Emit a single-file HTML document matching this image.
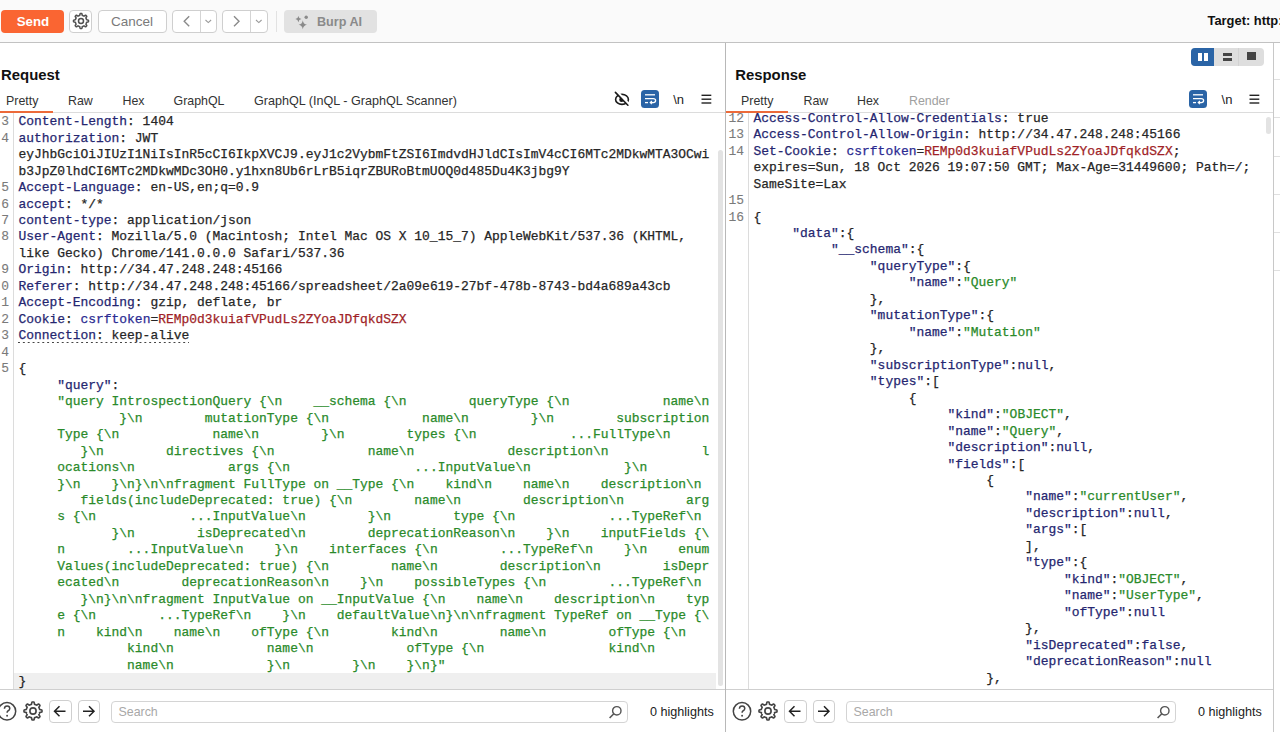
<!DOCTYPE html>
<html><head><meta charset="utf-8">
<style>
*{box-sizing:border-box}
html,body{margin:0;padding:0}
body{width:1280px;height:732px;overflow:hidden;position:relative;background:#fff;font-family:"Liberation Sans",sans-serif;color:#222}
.a{position:absolute}
.tb{left:0;top:0;width:1280px;height:42px;background:#fafafa}
.hl{height:1px;background:#c4c4c4}
.vl{width:1px;background:#c4c4c4}
.btn{position:absolute;border:1px solid #cfcfcf;border-radius:4px;background:#fff}
.ed{position:absolute;overflow:hidden;-webkit-text-stroke:0.25px currentColor;font-family:"Liberation Mono",monospace;font-size:12.94px;line-height:16.47px;white-space:pre;color:#262626}
.ed pre,.nums{margin:0;font:inherit;white-space:pre}
.hn{color:#252670}
.ck{color:#2b2b92}
.cv{color:#a01f27}
.jk{color:#252670}
.js{color:#2a8a2a}
.jl{color:#252670}
.nums{color:#7a7a7a;text-align:right;-webkit-text-stroke:0.1px currentColor}
.dot{background-image:linear-gradient(to right,#444 0,#444 2px,transparent 2px);background-size:4.86px 1.5px;background-repeat:repeat-x;background-position:0 14px}
.tab{position:absolute;font-size:12.4px;color:#333;top:94px}
.h1{position:absolute;font-weight:bold;font-size:14.9px;color:#111}
.sb{position:absolute;font-size:12.6px;color:#222;margin-top:1.3px}
.search{position:absolute;border:1px solid #d4d4d4;border-radius:4px;background:#fff}
.search span{position:absolute;left:7px;top:3px;font-size:12.4px;color:#a8a8a8}
</style></head><body>
<!-- toolbar -->
<div class="a tb"></div>
<div class="a hl" style="left:0;top:42px;width:1280px;background:#c2c2c2"></div>
<div class="a" style="left:1px;top:10px;width:63px;height:22.5px;background:#fa6532;border-radius:4px"></div>
<div class="a" style="left:1.5px;top:14px;width:63px;text-align:center;font-weight:bold;font-size:13.3px;color:#fff">Send</div>
<div class="btn" style="left:69px;top:10px;width:23px;height:22.5px"></div>
<svg class="a" style="left:70.9px;top:11.2px" width="20" height="20" viewBox="0 0 20 20"><path d="M10.00,2.50 10.29,2.51 10.59,2.52 10.87,2.67 11.06,3.33 11.17,4.09 11.33,4.46 11.55,4.51 11.76,4.58 11.97,4.65 12.18,4.73 12.39,4.82 12.59,4.92 12.79,5.03 12.98,5.14 13.35,4.99 13.97,4.53 14.57,4.20 14.87,4.30 15.09,4.49 15.30,4.70 15.51,4.91 15.70,5.13 15.80,5.43 15.47,6.03 15.01,6.65 14.86,7.02 14.97,7.21 15.08,7.41 15.18,7.61 15.27,7.82 15.35,8.03 15.42,8.24 15.49,8.45 15.54,8.67 15.91,8.83 16.67,8.94 17.33,9.13 17.48,9.41 17.49,9.71 17.50,10.00 17.49,10.29 17.48,10.59 17.33,10.87 16.67,11.06 15.91,11.17 15.54,11.33 15.49,11.55 15.42,11.76 15.35,11.97 15.27,12.18 15.18,12.39 15.08,12.59 14.97,12.79 14.86,12.98 15.01,13.35 15.47,13.97 15.80,14.57 15.70,14.87 15.51,15.09 15.30,15.30 15.09,15.51 14.87,15.70 14.57,15.80 13.97,15.47 13.35,15.01 12.98,14.86 12.79,14.97 12.59,15.08 12.39,15.18 12.18,15.27 11.97,15.35 11.76,15.42 11.55,15.49 11.33,15.54 11.17,15.91 11.06,16.67 10.87,17.33 10.59,17.48 10.29,17.49 10.00,17.50 9.71,17.49 9.41,17.48 9.13,17.33 8.94,16.67 8.83,15.91 8.67,15.54 8.45,15.49 8.24,15.42 8.03,15.35 7.82,15.27 7.61,15.18 7.41,15.08 7.21,14.97 7.02,14.86 6.65,15.01 6.03,15.47 5.43,15.80 5.13,15.70 4.91,15.51 4.70,15.30 4.49,15.09 4.30,14.87 4.20,14.57 4.53,13.97 4.99,13.35 5.14,12.98 5.03,12.79 4.92,12.59 4.82,12.39 4.73,12.18 4.65,11.97 4.58,11.76 4.51,11.55 4.46,11.33 4.09,11.17 3.33,11.06 2.67,10.87 2.52,10.59 2.51,10.29 2.50,10.00 2.51,9.71 2.52,9.41 2.67,9.13 3.33,8.94 4.09,8.83 4.46,8.67 4.51,8.45 4.58,8.24 4.65,8.03 4.73,7.82 4.82,7.61 4.92,7.41 5.03,7.21 5.14,7.02 4.99,6.65 4.53,6.03 4.20,5.43 4.30,5.13 4.49,4.91 4.70,4.70 4.91,4.49 5.13,4.30 5.43,4.20 6.03,4.53 6.65,4.99 7.02,5.14 7.21,5.03 7.41,4.92 7.61,4.82 7.82,4.73 8.03,4.65 8.24,4.58 8.45,4.51 8.67,4.46 8.83,4.09 8.94,3.33 9.13,2.67 9.41,2.52 9.71,2.51Z" fill="none" stroke="#505050" stroke-width="1.5" stroke-linejoin="round"/><circle cx="10" cy="10" r="2.5" fill="none" stroke="#505050" stroke-width="1.5"/></svg>
<div class="btn" style="left:97.5px;top:10px;width:69px;height:22.5px"></div>
<div class="a" style="left:97.5px;top:14px;width:69px;text-align:center;font-size:13.5px;color:#7a7a7a">Cancel</div>
<div class="btn" style="left:172px;top:10px;width:44.5px;height:22.5px"></div>
<div class="a vl" style="left:200px;top:10.5px;height:21.5px;background:#d4d4d4"></div>
<svg class="a" style="left:172px;top:10px" width="45" height="23"><polyline points="17.2,16.2 12.2,11.2 17.2,6.2" fill="none" stroke="#8a8a8a" stroke-width="1.4"/><polyline points="33.5,10 36.3,12.6 39.1,10" fill="none" stroke="#9a9a9a" stroke-width="1.1"/></svg>
<div class="btn" style="left:222px;top:10px;width:45.5px;height:22.5px"></div>
<div class="a vl" style="left:250px;top:10.5px;height:21.5px;background:#d4d4d4"></div>
<svg class="a" style="left:222px;top:10px" width="46" height="23"><polyline points="12,6.2 17,11.2 12,16.2" fill="none" stroke="#8a8a8a" stroke-width="1.4"/><polyline points="34,10 36.8,12.6 39.6,10" fill="none" stroke="#9a9a9a" stroke-width="1.1"/></svg>
<div class="a vl" style="left:275.5px;top:11px;height:21px;background:#e2e2e2"></div>
<div class="a" style="left:284px;top:10px;width:93px;height:22.5px;background:#e2e2e2;border-radius:4px"></div>
<svg class="a" style="left:290px;top:10px" width="22" height="22" viewBox="0 0 22 22"><path d="M12.8,10.2 Q13.3,14.2 17,14.7 Q13.3,15.2 12.8,19.2 Q12.3,15.2 8.6,14.7 Q12.3,14.2 12.8,10.2Z" fill="#8a8a8a"/><path d="M8.4,6 Q8.8,8.7 11.4,9.1 Q8.8,9.5 8.4,12.2 Q8,9.5 5.4,9.1 Q8,8.7 8.4,6Z" fill="#8a8a8a"/><circle cx="16.2" cy="7.3" r="1.7" fill="#8a8a8a"/></svg>
<div class="a" style="left:317px;top:15px;font-weight:bold;font-size:12.6px;color:#8a8a8a">Burp AI</div>
<div class="a" style="left:1207.5px;top:13.4px;font-weight:bold;font-size:12.9px;color:#111;white-space:pre">Target: http://34.47.248.248:45166</div>

<!-- request panel -->
<div class="h1" style="left:1px;top:67px">Request</div>
<div class="tab" style="left:6px">Pretty</div>
<div class="tab" style="left:68px">Raw</div>
<div class="tab" style="left:122.5px">Hex</div>
<div class="tab" style="left:173.5px">GraphQL</div>
<div class="tab" style="left:254px;font-size:12.6px">GraphQL (InQL - GraphQL Scanner)</div>
<svg class="a" style="left:608px;top:86px" width="28" height="24" viewBox="608 86 28 24"><defs><clipPath id="pc"><polygon points="600,80 603.3,80 630.6,108 600,108"/></clipPath></defs><ellipse cx="622" cy="99.4" rx="6.4" ry="5" fill="none" stroke="#1a1a1a" stroke-width="1.6"/><line x1="614.5" y1="89.5" x2="630.5" y2="105.9" stroke="#fff" stroke-width="2.8"/><circle cx="621.6" cy="99.7" r="2.4" fill="#1a1a1a" clip-path="url(#pc)"/><line x1="615.4" y1="92.4" x2="627.9" y2="105.2" stroke="#1a1a1a" stroke-width="1.6" stroke-linecap="round"/></svg>
<div class="a" style="left:641px;top:90px;width:18px;height:17.5px;background:#2a64a6;border-radius:3.5px"></div>
<svg class="a" style="left:641px;top:90px" width="18" height="18" viewBox="0 0 18 18"><line x1="4" y1="4.8" x2="14" y2="4.8" stroke="#fff" stroke-width="1.3"/><path d="M4,8.6 H12.2 Q14.6,8.6 14.6,10.6 Q14.6,12.6 12.2,12.6 H9.5" fill="none" stroke="#fff" stroke-width="1.3"/><polyline points="11,11 9.2,12.6 11,14.2" fill="none" stroke="#fff" stroke-width="1.1"/><line x1="4" y1="12.6" x2="7" y2="12.6" stroke="#fff" stroke-width="1.3"/></svg>
<div class="a" style="left:673.2px;top:92px;font-size:13px;color:#222">\n</div>
<svg class="a" style="left:700px;top:93px" width="13" height="12"><line x1="1.5" y1="2.3" x2="11.3" y2="2.3" stroke="#222" stroke-width="1.4"/><line x1="1.5" y1="6.2" x2="11.3" y2="6.2" stroke="#222" stroke-width="1.4"/><line x1="1.5" y1="10" x2="11.3" y2="10" stroke="#222" stroke-width="1.4"/></svg>
<div class="a hl" style="left:0;top:112px;width:725px;background:#dcdcdc"></div>
<div class="a" style="left:0;top:110.5px;width:53px;height:2px;background:#ec6a3a"></div>

<!-- request editor -->
<div class="a" style="left:13.5px;top:673.2px;width:702px;height:15.5px;background:#efefef"></div>
<div class="ed" style="left:0;top:113px;width:716px;height:576px">
<pre class="a nums" style="left:-40px;top:1.2px;width:49px">3
4


5
6
7
8

9
0
1
2
3
4
5


















</pre>
<pre class="a" style="left:18.4px;top:1.2px"><span class="hn">Content-Length</span>: 1404
<span class="hn">authorization</span>: JWT
eyJhbGciOiJIUzI1NiIsInR5cCI6IkpXVCJ9.eyJ1c2VybmFtZSI6ImdvdHJldCIsImV4cCI6MTc2MDkwMTA3OCwi
b3JpZ0lhdCI6MTc2MDkwMDc3OH0.y1hxn8Ub6rLrB5iqrZBURoBtmUOQ0d485Du4K3jbg9Y
<span class="hn">Accept-Language</span>: en-US,en;q=0.9
<span class="hn">accept</span>: */*
<span class="hn">content-type</span>: application/json
<span class="hn">User-Agent</span>: Mozilla/5.0 (Macintosh; Intel Mac OS X 10_15_7) AppleWebKit/537.36 (KHTML,
like Gecko) Chrome/141.0.0.0 Safari/537.36
<span class="hn">Origin</span>: http://34.47.248.248:45166
<span class="hn">Referer</span>: http://34.47.248.248:45166/spreadsheet/2a09e619-27bf-478b-8743-bd4a689a43cb
<span class="hn">Accept-Encoding</span>: gzip, deflate, br
<span class="hn">Cookie</span>: <span class="ck">csrftoken</span>=<span class="cv">REMp0d3kuiafVPudLs2ZYoaJDfqkdSZX</span>
<span class="dot"><span class="hn">Connection</span>: keep-alive</span>

{
     <span class="jk">&quot;query&quot;</span>:
     <span class="js">&quot;query IntrospectionQuery {\n    __schema {\n        queryType {\n            name\n</span>
     <span class="js">        }\n        mutationType {\n            name\n        }\n        subscription</span>
     <span class="js">Type {\n            name\n        }\n        types {\n            ...FullType\n     </span>
     <span class="js">   }\n        directives {\n            name\n            description\n            l</span>
     <span class="js">ocations\n            args {\n                ...InputValue\n            }\n        </span>
     <span class="js">}\n    }\n}\n\nfragment FullType on __Type {\n    kind\n    name\n    description\n </span>
     <span class="js">   fields(includeDeprecated: true) {\n        name\n        description\n        arg</span>
     <span class="js">s {\n            ...InputValue\n        }\n        type {\n            ...TypeRef\n </span>
     <span class="js">       }\n        isDeprecated\n        deprecationReason\n    }\n    inputFields {\</span>
     <span class="js">n        ...InputValue\n    }\n    interfaces {\n        ...TypeRef\n    }\n    enum</span>
     <span class="js">Values(includeDeprecated: true) {\n        name\n        description\n        isDepr</span>
     <span class="js">ecated\n        deprecationReason\n    }\n    possibleTypes {\n        ...TypeRef\n </span>
     <span class="js">   }\n}\n\nfragment InputValue on __InputValue {\n    name\n    description\n    typ</span>
     <span class="js">e {\n        ...TypeRef\n    }\n    defaultValue\n}\n\nfragment TypeRef on __Type {\</span>
     <span class="js">n    kind\n    name\n    ofType {\n        kind\n        name\n        ofType {\n   </span>
     <span class="js">         kind\n            name\n            ofType {\n                kind\n       </span>
     <span class="js">         name\n            }\n        }\n    }\n}&quot;</span>
}</pre>
</div>
<div class="a vl" style="left:13px;top:112.5px;height:577px;background:#dcdcdc"></div>
<div class="a" style="left:717.8px;top:150px;width:5px;height:536px;background:#e3e3e3;border-radius:2.5px"></div>
<div class="a hl" style="left:0;top:689px;width:725px;background:#cfcfcf"></div>

<!-- request search bar -->
<svg class="a" style="left:-3px;top:701px" width="22" height="22" viewBox="0 0 22 22"><circle cx="10" cy="10.3" r="8.7" fill="none" stroke="#444" stroke-width="1.5"/><path d="M7.4,7.8 Q7.6,5 10.1,5 Q12.8,5 12.8,7.6 Q12.8,9.2 10.9,10 Q10.1,10.4 10.1,11.8" fill="none" stroke="#444" stroke-width="1.5"/><circle cx="10.1" cy="14.8" r="0.95" fill="#444"/></svg>
<svg class="a" style="left:20.8px;top:699.4px" width="24" height="24" viewBox="0 0 20 20"><path d="M10.00,2.50 10.29,2.51 10.59,2.52 10.87,2.67 11.06,3.33 11.17,4.09 11.33,4.46 11.55,4.51 11.76,4.58 11.97,4.65 12.18,4.73 12.39,4.82 12.59,4.92 12.79,5.03 12.98,5.14 13.35,4.99 13.97,4.53 14.57,4.20 14.87,4.30 15.09,4.49 15.30,4.70 15.51,4.91 15.70,5.13 15.80,5.43 15.47,6.03 15.01,6.65 14.86,7.02 14.97,7.21 15.08,7.41 15.18,7.61 15.27,7.82 15.35,8.03 15.42,8.24 15.49,8.45 15.54,8.67 15.91,8.83 16.67,8.94 17.33,9.13 17.48,9.41 17.49,9.71 17.50,10.00 17.49,10.29 17.48,10.59 17.33,10.87 16.67,11.06 15.91,11.17 15.54,11.33 15.49,11.55 15.42,11.76 15.35,11.97 15.27,12.18 15.18,12.39 15.08,12.59 14.97,12.79 14.86,12.98 15.01,13.35 15.47,13.97 15.80,14.57 15.70,14.87 15.51,15.09 15.30,15.30 15.09,15.51 14.87,15.70 14.57,15.80 13.97,15.47 13.35,15.01 12.98,14.86 12.79,14.97 12.59,15.08 12.39,15.18 12.18,15.27 11.97,15.35 11.76,15.42 11.55,15.49 11.33,15.54 11.17,15.91 11.06,16.67 10.87,17.33 10.59,17.48 10.29,17.49 10.00,17.50 9.71,17.49 9.41,17.48 9.13,17.33 8.94,16.67 8.83,15.91 8.67,15.54 8.45,15.49 8.24,15.42 8.03,15.35 7.82,15.27 7.61,15.18 7.41,15.08 7.21,14.97 7.02,14.86 6.65,15.01 6.03,15.47 5.43,15.80 5.13,15.70 4.91,15.51 4.70,15.30 4.49,15.09 4.30,14.87 4.20,14.57 4.53,13.97 4.99,13.35 5.14,12.98 5.03,12.79 4.92,12.59 4.82,12.39 4.73,12.18 4.65,11.97 4.58,11.76 4.51,11.55 4.46,11.33 4.09,11.17 3.33,11.06 2.67,10.87 2.52,10.59 2.51,10.29 2.50,10.00 2.51,9.71 2.52,9.41 2.67,9.13 3.33,8.94 4.09,8.83 4.46,8.67 4.51,8.45 4.58,8.24 4.65,8.03 4.73,7.82 4.82,7.61 4.92,7.41 5.03,7.21 5.14,7.02 4.99,6.65 4.53,6.03 4.20,5.43 4.30,5.13 4.49,4.91 4.70,4.70 4.91,4.49 5.13,4.30 5.43,4.20 6.03,4.53 6.65,4.99 7.02,5.14 7.21,5.03 7.41,4.92 7.61,4.82 7.82,4.73 8.03,4.65 8.24,4.58 8.45,4.51 8.67,4.46 8.83,4.09 8.94,3.33 9.13,2.67 9.41,2.52 9.71,2.51Z" fill="none" stroke="#444" stroke-width="1.35" stroke-linejoin="round"/><circle cx="10" cy="10" r="2.6" fill="none" stroke="#444" stroke-width="1.35"/></svg>
<div class="btn" style="left:49px;top:700px;width:23px;height:22.5px"></div>
<svg class="a" style="left:49px;top:700px" width="23" height="23"><path d="M5.5,11.3 H16.5 M10.5,6.3 L5.5,11.3 L10.5,16.3" fill="none" stroke="#222" stroke-width="1.5"/></svg>
<div class="btn" style="left:77.5px;top:700px;width:22px;height:22.5px"></div>
<svg class="a" style="left:77.5px;top:700px" width="23" height="23"><path d="M5,11.3 H16 M11,6.3 L16,11.3 L11,16.3" fill="none" stroke="#222" stroke-width="1.5"/></svg>
<div class="search" style="left:110.5px;top:701px;width:517px;height:21.5px"><span>Search</span></div>
<svg class="a" style="left:607px;top:704px" width="16" height="16"><circle cx="9.8" cy="6.8" r="4.2" fill="none" stroke="#555" stroke-width="1.4"/><line x1="6.8" y1="9.8" x2="2.6" y2="14" stroke="#555" stroke-width="1.6"/></svg>
<div class="sb" style="left:650px;top:704px">0 highlights</div>

<!-- divider -->
<div class="a vl" style="left:725px;top:43px;height:689px;background:#b8b8b8"></div>

<!-- response panel -->
<div class="h1" style="left:735.2px;top:67px">Response</div>
<div class="a" style="left:1191px;top:48px;width:72.5px;height:18px;background:#dedede;border-radius:4px"></div>
<div class="a" style="left:1191px;top:48px;width:23px;height:18px;background:#2a64a6;border-radius:4px 0 0 4px"></div>
<div class="a" style="left:1238px;top:48px;width:1px;height:18px;background:#d2d2d2"></div>
<div class="a" style="left:1198px;top:52.5px;width:4px;height:8px;background:#fff"></div>
<div class="a" style="left:1204px;top:52.5px;width:4px;height:8px;background:#fff"></div>
<div class="a" style="left:1222.5px;top:52.5px;width:9.5px;height:3px;background:#444"></div>
<div class="a" style="left:1222.5px;top:57.5px;width:9.5px;height:3px;background:#444"></div>
<div class="a" style="left:1247px;top:52.3px;width:9.3px;height:8px;background:#444"></div>
<div class="tab" style="left:741px">Pretty</div>
<div class="tab" style="left:803.5px">Raw</div>
<div class="tab" style="left:857px">Hex</div>
<div class="tab" style="left:909px;color:#a0a0a0">Render</div>
<div class="a" style="left:1189.2px;top:90px;width:18px;height:17.5px;background:#2a64a6;border-radius:3.5px"></div>
<svg class="a" style="left:1189.2px;top:90px" width="18" height="18" viewBox="0 0 18 18"><line x1="4" y1="4.8" x2="14" y2="4.8" stroke="#fff" stroke-width="1.3"/><path d="M4,8.6 H12.2 Q14.6,8.6 14.6,10.6 Q14.6,12.6 12.2,12.6 H9.5" fill="none" stroke="#fff" stroke-width="1.3"/><polyline points="11,11 9.2,12.6 11,14.2" fill="none" stroke="#fff" stroke-width="1.1"/><line x1="4" y1="12.6" x2="7" y2="12.6" stroke="#fff" stroke-width="1.3"/></svg>
<div class="a" style="left:1221.6px;top:92px;font-size:13px;color:#222">\n</div>
<svg class="a" style="left:1248px;top:93px" width="13" height="12"><line x1="1.5" y1="2.3" x2="11.3" y2="2.3" stroke="#222" stroke-width="1.4"/><line x1="1.5" y1="6.2" x2="11.3" y2="6.2" stroke="#222" stroke-width="1.4"/><line x1="1.5" y1="10" x2="11.3" y2="10" stroke="#222" stroke-width="1.4"/></svg>
<div class="a hl" style="left:726px;top:112px;width:547px;background:#dcdcdc"></div>
<div class="a" style="left:726px;top:110.5px;width:62px;height:2px;background:#ec6a3a"></div>

<!-- response editor -->
<div class="ed" style="left:726px;top:113px;width:547px;height:576px">
<pre class="a nums" style="left:0;top:-2.3px;width:18px">12
13
14


15
16




























</pre>
<pre class="a" style="left:27.4px;top:-2.3px"><span class="hn">Access-Control-Allow-Credentials</span>: true
<span class="hn">Access-Control-Allow-Origin</span>: http://34.47.248.248:45166
<span class="hn">Set-Cookie</span>: <span class="ck">csrftoken</span>=<span class="cv">REMp0d3kuiafVPudLs2ZYoaJDfqkdSZX</span>;
expires=Sun, 18 Oct 2026 19:07:50 GMT; Max-Age=31449600; Path=/;
SameSite=Lax

{
     <span class="jk">&quot;data&quot;</span>:{
          <span class="jk">&quot;__schema&quot;</span>:{
               <span class="jk">&quot;queryType&quot;</span>:{
                    <span class="jk">&quot;name&quot;</span>:<span class="js">&quot;Query&quot;</span>
               },
               <span class="jk">&quot;mutationType&quot;</span>:{
                    <span class="jk">&quot;name&quot;</span>:<span class="js">&quot;Mutation&quot;</span>
               },
               <span class="jk">&quot;subscriptionType&quot;</span>:<span class="jl">null</span>,
               <span class="jk">&quot;types&quot;</span>:[
                    {
                         <span class="jk">&quot;kind&quot;</span>:<span class="js">&quot;OBJECT&quot;</span>,
                         <span class="jk">&quot;name&quot;</span>:<span class="js">&quot;Query&quot;</span>,
                         <span class="jk">&quot;description&quot;</span>:<span class="jl">null</span>,
                         <span class="jk">&quot;fields&quot;</span>:[
                              {
                                   <span class="jk">&quot;name&quot;</span>:<span class="js">&quot;currentUser&quot;</span>,
                                   <span class="jk">&quot;description&quot;</span>:<span class="jl">null</span>,
                                   <span class="jk">&quot;args&quot;</span>:[
                                   ],
                                   <span class="jk">&quot;type&quot;</span>:{
                                        <span class="jk">&quot;kind&quot;</span>:<span class="js">&quot;OBJECT&quot;</span>,
                                        <span class="jk">&quot;name&quot;</span>:<span class="js">&quot;UserType&quot;</span>,
                                        <span class="jk">&quot;ofType&quot;</span>:<span class="jl">null</span>
                                   },
                                   <span class="jk">&quot;isDeprecated&quot;</span>:<span class="jl">false</span>,
                                   <span class="jk">&quot;deprecationReason&quot;</span>:<span class="jl">null</span>
                              },
                              {</pre>
</div>
<div class="a vl" style="left:748px;top:112.5px;height:577px;background:#dcdcdc"></div>
<div class="a" style="left:1266px;top:117px;width:5px;height:17px;background:#e3e3e3;border-radius:2.5px"></div>
<div class="a hl" style="left:726px;top:689px;width:547px;background:#cfcfcf"></div>

<!-- response search bar -->
<svg class="a" style="left:732px;top:701px" width="22" height="22" viewBox="0 0 22 22"><circle cx="10" cy="10.3" r="8.7" fill="none" stroke="#444" stroke-width="1.5"/><path d="M7.4,7.8 Q7.6,5 10.1,5 Q12.8,5 12.8,7.6 Q12.8,9.2 10.9,10 Q10.1,10.4 10.1,11.8" fill="none" stroke="#444" stroke-width="1.5"/><circle cx="10.1" cy="14.8" r="0.95" fill="#444"/></svg>
<svg class="a" style="left:755.9px;top:699.4px" width="24" height="24" viewBox="0 0 20 20"><path d="M10.00,2.50 10.29,2.51 10.59,2.52 10.87,2.67 11.06,3.33 11.17,4.09 11.33,4.46 11.55,4.51 11.76,4.58 11.97,4.65 12.18,4.73 12.39,4.82 12.59,4.92 12.79,5.03 12.98,5.14 13.35,4.99 13.97,4.53 14.57,4.20 14.87,4.30 15.09,4.49 15.30,4.70 15.51,4.91 15.70,5.13 15.80,5.43 15.47,6.03 15.01,6.65 14.86,7.02 14.97,7.21 15.08,7.41 15.18,7.61 15.27,7.82 15.35,8.03 15.42,8.24 15.49,8.45 15.54,8.67 15.91,8.83 16.67,8.94 17.33,9.13 17.48,9.41 17.49,9.71 17.50,10.00 17.49,10.29 17.48,10.59 17.33,10.87 16.67,11.06 15.91,11.17 15.54,11.33 15.49,11.55 15.42,11.76 15.35,11.97 15.27,12.18 15.18,12.39 15.08,12.59 14.97,12.79 14.86,12.98 15.01,13.35 15.47,13.97 15.80,14.57 15.70,14.87 15.51,15.09 15.30,15.30 15.09,15.51 14.87,15.70 14.57,15.80 13.97,15.47 13.35,15.01 12.98,14.86 12.79,14.97 12.59,15.08 12.39,15.18 12.18,15.27 11.97,15.35 11.76,15.42 11.55,15.49 11.33,15.54 11.17,15.91 11.06,16.67 10.87,17.33 10.59,17.48 10.29,17.49 10.00,17.50 9.71,17.49 9.41,17.48 9.13,17.33 8.94,16.67 8.83,15.91 8.67,15.54 8.45,15.49 8.24,15.42 8.03,15.35 7.82,15.27 7.61,15.18 7.41,15.08 7.21,14.97 7.02,14.86 6.65,15.01 6.03,15.47 5.43,15.80 5.13,15.70 4.91,15.51 4.70,15.30 4.49,15.09 4.30,14.87 4.20,14.57 4.53,13.97 4.99,13.35 5.14,12.98 5.03,12.79 4.92,12.59 4.82,12.39 4.73,12.18 4.65,11.97 4.58,11.76 4.51,11.55 4.46,11.33 4.09,11.17 3.33,11.06 2.67,10.87 2.52,10.59 2.51,10.29 2.50,10.00 2.51,9.71 2.52,9.41 2.67,9.13 3.33,8.94 4.09,8.83 4.46,8.67 4.51,8.45 4.58,8.24 4.65,8.03 4.73,7.82 4.82,7.61 4.92,7.41 5.03,7.21 5.14,7.02 4.99,6.65 4.53,6.03 4.20,5.43 4.30,5.13 4.49,4.91 4.70,4.70 4.91,4.49 5.13,4.30 5.43,4.20 6.03,4.53 6.65,4.99 7.02,5.14 7.21,5.03 7.41,4.92 7.61,4.82 7.82,4.73 8.03,4.65 8.24,4.58 8.45,4.51 8.67,4.46 8.83,4.09 8.94,3.33 9.13,2.67 9.41,2.52 9.71,2.51Z" fill="none" stroke="#444" stroke-width="1.35" stroke-linejoin="round"/><circle cx="10" cy="10" r="2.6" fill="none" stroke="#444" stroke-width="1.35"/></svg>
<div class="btn" style="left:784px;top:700px;width:22.5px;height:22.5px"></div>
<svg class="a" style="left:784px;top:700px" width="23" height="23"><path d="M5.5,11.3 H16.5 M10.5,6.3 L5.5,11.3 L10.5,16.3" fill="none" stroke="#222" stroke-width="1.5"/></svg>
<div class="btn" style="left:812.5px;top:700px;width:22px;height:22.5px"></div>
<svg class="a" style="left:812.5px;top:700px" width="23" height="23"><path d="M5,11.3 H16 M11,6.3 L16,11.3 L11,16.3" fill="none" stroke="#222" stroke-width="1.5"/></svg>
<div class="search" style="left:845.5px;top:701px;width:330px;height:21.5px"><span>Search</span></div>
<svg class="a" style="left:1155px;top:704px" width="16" height="16"><circle cx="9.8" cy="6.8" r="4.2" fill="none" stroke="#555" stroke-width="1.4"/><line x1="6.8" y1="9.8" x2="2.6" y2="14" stroke="#555" stroke-width="1.6"/></svg>
<div class="sb" style="left:1198px;top:704px">0 highlights</div>

<!-- right strip -->
<div class="a vl" style="left:1273px;top:43px;height:689px;background:#c8c8c8"></div>
<div class="a hl" style="left:1274px;top:79px;width:6px;background:#e0e0e0"></div>
<div class="a hl" style="left:1274px;top:117px;width:6px;background:#e0e0e0"></div>
<div class="a hl" style="left:1274px;top:156px;width:6px;background:#e0e0e0"></div>
<div class="a hl" style="left:1274px;top:194px;width:6px;background:#e0e0e0"></div>
<div class="a hl" style="left:1274px;top:232px;width:6px;background:#e0e0e0"></div>
<div class="a hl" style="left:1274px;top:270px;width:6px;background:#e0e0e0"></div>
</body></html>
